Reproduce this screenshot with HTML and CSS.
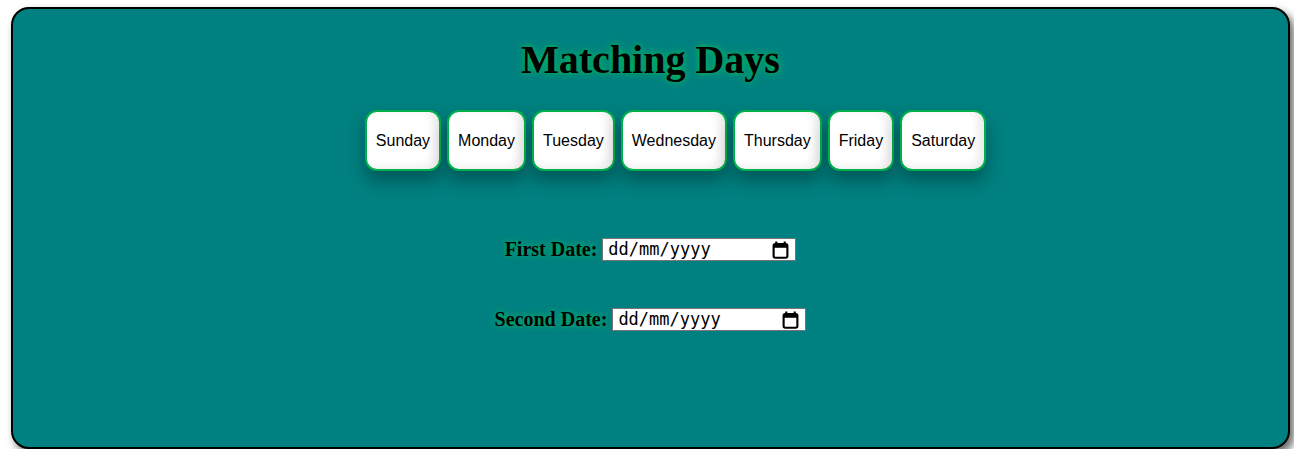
FILE: index.html
```html
<!DOCTYPE html>
<html lang="en-GB">
<head>
<meta charset="utf-8">
<link rel="stylesheet" href="styles.css">
</head>
<body>
<div class="card">
  <h1 class="title">Matching Days</h1>
  <ul class="days">
    <li class="day">Sunday</li>
    <li class="day">Monday</li>
    <li class="day">Tuesday</li>
    <li class="day">Wednesday</li>
    <li class="day">Thursday</li>
    <li class="day">Friday</li>
    <li class="day">Saturday</li>
  </ul>
  <div class="dates">
    <div class="row">
      <label class="lbl">First Date:</label>
      <div class="date">
        <span class="date-text">dd/mm/yyyy</span>
        <svg class="cal" width="17" height="18" viewBox="0 0 16 17"><path d="M4 0.5v3M12 0.5v3" stroke="#000" stroke-width="2" fill="none"/><rect x="1.5" y="3" width="13" height="12.8" rx="1.6" fill="none" stroke="#000" stroke-width="2"/><rect x="1.5" y="3" width="13" height="3.4" fill="#000"/></svg>
      </div>
    </div>
    <div class="row">
      <label class="lbl">Second Date:</label>
      <div class="date">
        <span class="date-text">dd/mm/yyyy</span>
        <svg class="cal" width="17" height="18" viewBox="0 0 16 17"><path d="M4 0.5v3M12 0.5v3" stroke="#000" stroke-width="2" fill="none"/><rect x="1.5" y="3" width="13" height="12.8" rx="1.6" fill="none" stroke="#000" stroke-width="2"/><rect x="1.5" y="3" width="13" height="3.4" fill="#000"/></svg>
      </div>
    </div>
  </div>
</div>
</body>
</html>
```
FILE: styles.css
```css
html, body {
  margin: 0;
  padding: 0;
  background: #ffffff;
}
body {
  padding: 7px 4px 0 11px;
  font-family: "Liberation Serif", "Times New Roman", serif;
}
.card {
  box-sizing: border-box;
  height: 442px;
  background: #008080;
  border: 2px solid #000;
  border-radius: 18px;
  box-shadow: 4px 5px 9px rgba(0,0,0,0.6);
  padding-top: 28px;
}
.title {
  margin: 0;
  text-align: center;
  font-size: 40px;
  font-weight: bold;
  line-height: 46px;
  color: #000;
  text-shadow: 0 0 8px #00c060, 0 0 3px #00a050;
}
.days {
  list-style: none;
  margin: 27px 0 0 0;
  padding: 0 0 0 50px;
  display: flex;
  justify-content: center;
  gap: 6px;
}
.day {
  font-family: "Liberation Sans", Arial, sans-serif;
  font-size: 16px;
  line-height: 19px;
  padding: 19px 9px;
  background: #fff;
  color: #000;
  border: 2px solid #00b04a;
  border-radius: 12px;
  box-shadow: 0 10px 18px rgba(0,0,0,0.32), inset -6px -2px 8px rgba(0,0,0,0.08);
}
.dates {
  margin-top: 67px;
  display: flex;
  flex-direction: column;
  align-items: center;
  gap: 47px;
}
.row {
  display: flex;
  align-items: center;
  height: 23px;
}
.lbl {
  font-weight: bold;
  font-size: 20px;
  color: #000;
  text-shadow: 0 0 6px #00c060;
  margin-right: 5px;
}
.date {
  box-sizing: border-box;
  width: 194px;
  height: 23px;
  display: flex;
  align-items: center;
  justify-content: space-between;
  padding: 0 6px 0 5px;
  border: 1px solid #767676;
  background: #fff;
}
.date-text {
  font-family: "DejaVu Sans Mono", monospace;
  font-size: 17px;
  line-height: 21px;
  color: #000;
}
.cal {
  display: block;
}
```
